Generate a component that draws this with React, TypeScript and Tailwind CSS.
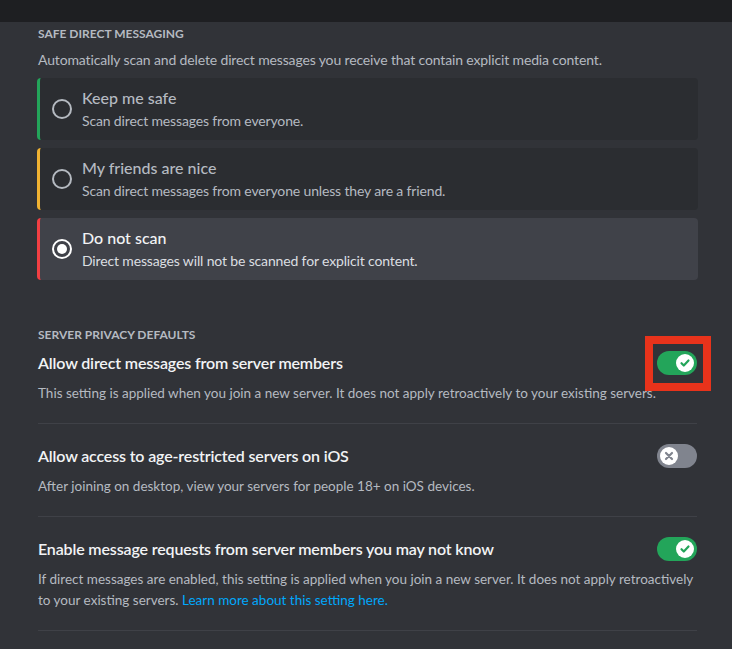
import React from "react";

const font = { fontFamily: 'Lato, "Noto Sans", sans-serif' };

type Option = { title: string; desc: string; accent: string; selected?: boolean };

const options: Option[] = [
  { title: "Keep me safe", desc: "Scan direct messages from everyone.", accent: "border-l-[#23a55a]" },
  {
    title: "My friends are nice",
    desc: "Scan direct messages from everyone unless they are a friend.",
    accent: "border-l-[#f0b232]",
  },
  {
    title: "Do not scan",
    desc: "Direct messages will not be scanned for explicit content.",
    accent: "border-l-[#f23f43]",
    selected: true,
  },
];

function Radio({ checked }: { checked?: boolean }) {
  return (
    <div
      className={`w-5 h-5 rounded-full border-2 flex items-center justify-center shrink-0 ${
        checked ? "border-white" : "border-[#b5bac1]"
      }`}
    >
      {checked && <div className="w-[10px] h-[10px] rounded-full bg-white" />}
    </div>
  );
}

function Toggle({ on }: { on: boolean }) {
  return (
    <div
      className={`w-10 h-6 rounded-full flex items-center px-[3px] shrink-0 ${
        on ? "bg-[#23a55a] justify-end" : "bg-[#80848e] justify-start"
      }`}
    >
      <div className="w-[18px] h-[18px] rounded-full bg-white flex items-center justify-center">
        {on ? (
          <svg width="12" height="12" viewBox="0 0 12 12" fill="none">
            <path d="M2.5 6.2l2.3 2.3 4.7-5" stroke="#23a55a" strokeWidth="2.2" strokeLinecap="round" strokeLinejoin="round" />
          </svg>
        ) : (
          <svg width="10" height="10" viewBox="0 0 10 10" fill="none">
            <path d="M2 2l6 6M8 2l-6 6" stroke="#80848e" strokeWidth="2.2" strokeLinecap="round" />
          </svg>
        )}
      </div>
    </div>
  );
}

function SettingRow({
  title,
  on,
  highlight,
  children,
  first,
}: {
  title: string;
  on: boolean;
  highlight?: boolean;
  children: React.ReactNode;
  first?: boolean;
}) {
  return (
    <div className={`border-b border-[#3f4147] pb-[19px] ${first ? "pt-[10px]" : "pt-[22px]"}`}>
      <div className="flex items-center justify-between h-5">
        <div className="text-[16px] leading-5 font-semibold tracking-[-0.15px] text-[#f2f3f5]">{title}</div>
        <div className="relative">
          <Toggle on={on} />
          {highlight && (
            <div className="absolute -left-[12px] -right-[14px] -top-[15px] -bottom-[16px] border-[8px] border-[#e8331b]" />
          )}
        </div>
      </div>
      <div className="mt-[10px] text-[13.5px] leading-[21px] text-[#b5bac1]">{children}</div>
    </div>
  );
}

export default function App() {
  return (
    <div className="w-[732px] h-[649px] bg-[#313338] overflow-hidden" style={font}>
      <div className="h-[22px] bg-[#1e1f22]" />
      <div className="w-[661px] ml-[37px] pt-[4px]">
        <div className="text-[12px] leading-4 font-bold uppercase text-[#b5bac1] pl-px">Safe Direct Messaging</div>
        <div className="mt-[8px] text-[14px] leading-5 tracking-[-0.14px] text-[#b5bac1] pl-px">
          Automatically scan and delete direct messages you receive that contain explicit media content.
        </div>
        <div className="mt-[8px] flex flex-col gap-2">
          {options.map((o) => (
            <div
              key={o.title}
              className={`h-[62px] rounded-[4px] border-l-[3px] ${o.accent} flex items-center pl-[12px] ${
                o.selected ? "bg-[#404249]" : "bg-[#2b2d31]"
              }`}
            >
              <Radio checked={o.selected} />
              <div className="ml-[10px] flex flex-col">
                <div
                  className={`text-[16px] leading-5 font-medium ${o.selected ? "text-[#f2f3f5]" : "text-[#b5bac1]"}`}
                >
                  {o.title}
                </div>
                <div
                  className={`mt-[4px] text-[14px] leading-[18px] tracking-[-0.15px] ${
                    o.selected ? "text-[#dbdee1]" : "text-[#b5bac1]"
                  }`}
                >
                  {o.desc}
                </div>
              </div>
            </div>
          ))}
        </div>

        <div className="mt-[47px] text-[12px] leading-4 font-bold uppercase text-[#b5bac1] pl-px">
          Server Privacy Defaults
        </div>
        <div className="w-[660px] pl-px">
          <SettingRow title="Allow direct messages from server members" on highlight first>
            This setting is applied when you join a new server. It does not apply retroactively to your existing servers.
          </SettingRow>
          <SettingRow title="Allow access to age-restricted servers on iOS" on={false}>
            After joining on desktop, view your servers for people 18+ on iOS devices.
          </SettingRow>
          <SettingRow title="Enable message requests from server members you may not know" on>
            If direct messages are enabled, this setting is applied when you join a new server. It does not apply
            retroactively
            <br />
            to your existing servers. <span className="text-[#00a8fc]">Learn more about this setting here.</span>
          </SettingRow>
        </div>
      </div>
    </div>
  );
}
